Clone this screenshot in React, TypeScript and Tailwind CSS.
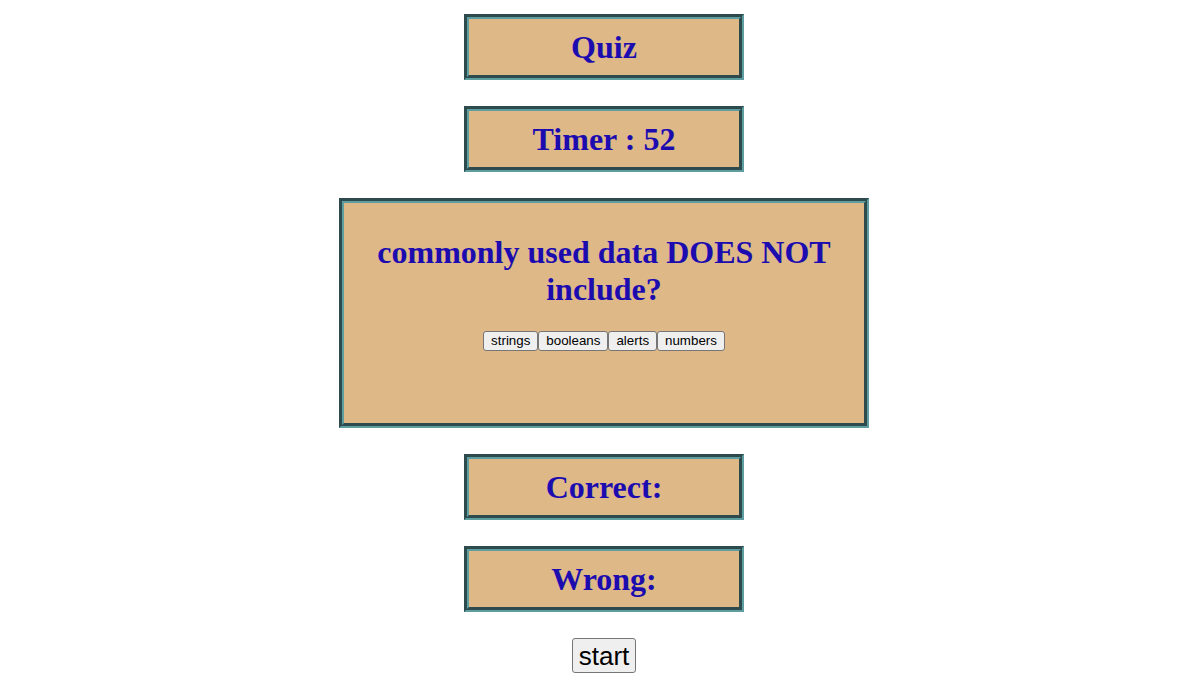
const boxCls =
  "bg-[#deb887] border-[5px] border-[#5f9ea0] [border-style:groove] text-center text-[#1c0caf] font-bold";

function SmallBox({ label }: { label: string }) {
  return (
    <div
      className={`${boxCls} w-[280px] h-[66px] px-[10px] flex items-center justify-center`}
    >
      <h1 className="text-[32px] leading-[36px] m-0 font-['Liberation_Serif',serif]">{label}</h1>
    </div>
  );
}

const answers = ["strings", "booleans", "alerts", "numbers"];

export default function App() {
  return (
    <div className="min-h-[682px] bg-white flex flex-col items-center pt-[14px] pl-[11px] gap-[26px]">
      <SmallBox label="Quiz" />
      <SmallBox label="Timer : 52" />

      <div className={`${boxCls} w-[530px] h-[230px] p-[10px]`}>
        <h1 className="text-[32px] leading-[37px] mt-[21px] mb-[23px] font-['Liberation_Serif',serif]">
          commonly used data DOES NOT include?
        </h1>
        <div className="flex justify-center">
          {answers.map((a) => (
            <button
              key={a}
              className="bg-[#efefef] border border-[#767676] rounded-[3px] px-[7px] h-[20px] text-[13.33px] leading-[16px] text-black font-normal font-['Liberation_Sans',Arial,sans-serif]"
            >
              {a}
            </button>
          ))}
        </div>
      </div>

      <SmallBox label="Correct:" />
      <SmallBox label="Wrong:" />

      <button className="bg-[#efefef] border border-[#767676] rounded-[3px] px-[6px] h-[35px] text-[26px] leading-[30px] text-black font-['Liberation_Sans',Arial,sans-serif]">
        start
      </button>
    </div>
  );
}
